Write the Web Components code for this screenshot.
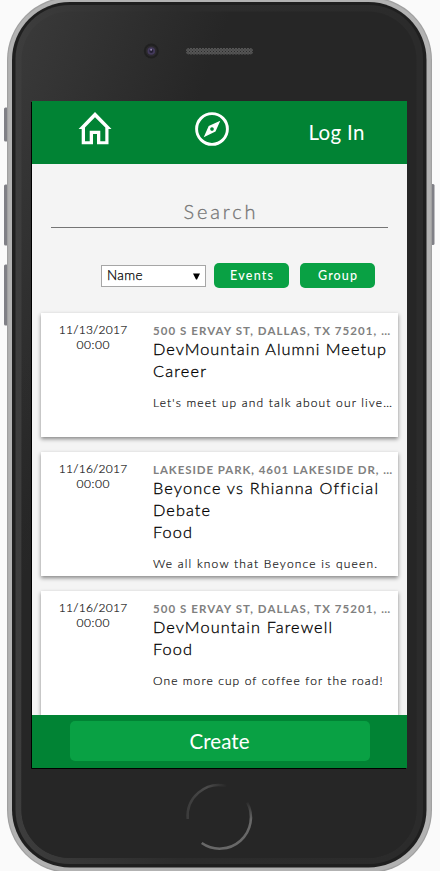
<!DOCTYPE html>
<html lang="en"><head><meta charset="utf-8"><title>Events</title>
<style>html,body{margin:0;background:#fafafa}body{width:440px;height:871px;overflow:hidden;font-family:Lato,"Open Sans",sans-serif}</style></head>
<body>
<phone-device>
  <app-header></app-header>
  <search-panel></search-panel>
  <event-list>
    <event-card date="11/13/2017" time="00:00" place="500 S ERVAY ST, DALLAS, TX 75201, …" pw="237" name="DevMountain Alumni Meetup" nw="233" kind="Career" kw="53" text="Let's meet up and talk about our live…" tw="239"></event-card>
    <event-card date="11/16/2017" time="00:00" place="LAKESIDE PARK, 4601 LAKESIDE DR, …" pw="239" name="Beyonce vs Rhianna Official" nw="224" more="Debate" mw="57" kind="Food" kw="39" text="We all know that Beyonce is queen." tw="224"></event-card>
    <event-card date="11/16/2017" time="00:00" place="500 S ERVAY ST, DALLAS, TX 75201, …" pw="237" name="DevMountain Farewell" nw="179" kind="Food" kw="39" text="One more cup of coffee for the road!" tw="229"></event-card>
  </event-list>
  <create-bar></create-bar>
</phone-device>
<script>
// Text line whose letter spacing is set so that it fills a given width.
customElements.define('fit-text', class extends HTMLElement {
  connectedCallback() {
    if (this.shadowRoot) return;
    this.attachShadow({mode:'open'}).innerHTML = `<style>:host{display:block;white-space:nowrap}span{display:inline-block}</style><span></span>`;
    const s = this.shadowRoot.querySelector('span');
    s.textContent = this.getAttribute('text');
    const w = +this.getAttribute('w'), n = s.textContent.length;
    const ls = (w - s.getBoundingClientRect().width) / (n - 1);
    s.style.letterSpacing = ls.toFixed(3) + 'px';
    s.style.marginRight = (-ls).toFixed(3) + 'px';
  }
});
customElements.define('phone-device', class extends HTMLElement {
  constructor() { super(); this.attachShadow({mode:'open'}).innerHTML = `
<style>
:host{display:block;position:relative;width:440px;height:871px;overflow:hidden;box-sizing:border-box;padding:101px 33px 103px 32px}
svg{position:absolute;left:0;top:0}
main{position:relative;display:flex;flex-direction:column;width:375px;height:667px;background:#f4f4f4;overflow:hidden}
</style>
<svg width="440" height="871" viewBox="0 0 440 871">
<defs>
<linearGradient id="g" gradientUnits="userSpaceOnUse" x1="12" y1="60" x2="190" y2="125"><stop offset="0" stop-color="#393939"/><stop offset="1" stop-color="#262626"/></linearGradient>
<linearGradient id="rim" x1="0" y1="0" x2="1" y2="0"><stop offset="0" stop-color="#3d3d3d"/><stop offset=".4" stop-color="#2c2c2c"/><stop offset="1" stop-color="#2b2b2b"/></linearGradient>
<linearGradient id="fade" x1="0" y1="0" x2="0" y2="1"><stop offset=".4" stop-color="#262626" stop-opacity="0"/><stop offset=".9" stop-color="#262626"/></linearGradient>
<linearGradient id="h1" x1="0" y1="0" x2="1" y2="0"><stop offset="0" stop-color="#3c3c3c"/><stop offset=".5" stop-color="#4b4b4b"/><stop offset="1" stop-color="#282828"/></linearGradient>
<linearGradient id="h2" gradientUnits="userSpaceOnUse" x1="0" y1="802" x2="0" y2="820"><stop offset="0" stop-color="#2a2a2a"/><stop offset="1" stop-color="#686868"/></linearGradient>
<pattern id="p" width="3" height="3" patternUnits="userSpaceOnUse"><rect width="3" height="3" fill="#555"/><rect width="1" height="1" fill="#2b2b2b"/><rect x="1.500" y="1.500" width="1" height="1" fill="#333"/></pattern>
</defs>
<g fill="#808086"><rect x="4" y="107.500" width="4" height="34" rx="1.500"/><rect x="4" y="184.500" width="4" height="61" rx="1.500"/><rect x="4" y="264.500" width="4" height="61" rx="1.500"/><rect x="431" y="184" width="3.500" height="61" rx="1.500"/></g>
<rect x="7" y="-3" width="425" height="876" rx="63" fill="#a0a0a0"/>
<rect x="8.200" y="-1.800" width="422.600" height="873.600" rx="62" fill="#b2b2b2"/>
<rect x="12" y="2" width="414.500" height="865.500" rx="58" fill="#1f1f1f"/>
<rect x="15.500" y="5" width="407.500" height="859" rx="54" fill="url(#rim)"/>
<rect x="21.500" y="11.500" width="395" height="846.500" rx="48" fill="url(#g)"/>
<rect x="21.500" y="11.500" width="395" height="846.500" rx="48" fill="url(#fade)"/>
<circle cx="151.300" cy="51" r="7.500" fill="#202020"/><circle cx="151.300" cy="51" r="5.500" fill="#2c2a2e"/><circle cx="151.300" cy="51" r="3.800" fill="#443a5c"/><circle cx="151.300" cy="51" r="2" fill="#252033"/><circle cx="151.100" cy="49.700" r="1" fill="#9187ab"/>
<rect x="186" y="48" width="67" height="6.500" rx="3.200" fill="url(#p)"/>
<path d="M187.700 819A31.300 31.300 0 0 1 226.200 785.900" fill="none" stroke="url(#h1)" stroke-width="2.500"/>
<path d="M247.200 802.500A31.300 31.300 0 0 1 201.700 843" fill="none" stroke="url(#h2)" stroke-width="2.500"/>
<path d="M31.500 102V768.500H406" fill="none" stroke="#000"/>
</svg><main><slot></slot></main>`; }
});
customElements.define('app-header', class extends HTMLElement {
  constructor() { super(); this.attachShadow({mode:'open'}).innerHTML = `
<style>:host{display:grid;grid-template-columns:126px 108px 141px;height:63px;flex:none;background:#018334;color:#fff;font-size:20.500px;line-height:24px}
a{display:flex;justify-content:center;padding-top:8px}.l{padding-top:19px}</style>
<a><svg width="40" height="40" viewBox="75 109 40 40"><path fill="#fff" fill-rule="evenodd" d="M95 112L111.500 129H108.500V144.200H97V134H93V144.200H81.700V129H78.600ZM95 117.300L85 127.500V141.200H89.700V130.800H100.300V141.200H105.300V127.500Z"/></svg></a>
<a><svg width="40" height="40" viewBox="192 109 40 40"><circle cx="212" cy="129" r="15.400" fill="none" stroke="#fff" stroke-width="2.900"/><path fill="#fff" fill-rule="evenodd" d="M220.300 120.700L215.500 131.500L203.700 137.300L208.700 126ZM212 127.200a1.800 1.800 0 1 0 .01 0Z"/></svg></a>
<a class="l"><fit-text text="Log In" w="56"></fit-text></a>`; }
});
customElements.define('search-panel', class extends HTMLElement {
  constructor() { super(); this.attachShadow({mode:'open'}).innerHTML = `
<style>:host{display:block;height:149px;flex:none}
.s{margin:0 19px;border-bottom:1px solid #757575;display:flex;justify-content:center;color:#757575;font-size:20px;font-weight:300;-webkit-text-stroke:.3px #757575;line-height:24px;padding-top:35px;box-sizing:border-box;height:64px}
.r{display:flex;margin:35px 0 0 69px;align-items:center}
.sel{box-sizing:border-box;width:105px;height:22px;border:1px solid #a6a6a6;background:#fff;display:flex;justify-content:space-between;padding:1px 5px;font-size:13.500px;font-weight:300;-webkit-text-stroke:.25px #000;line-height:17px;color:#000;margin-right:8px}
b{display:flex;justify-content:center;width:75px;height:25px;border-radius:5px;background:#09a144;color:#fff;font-size:12.500px;line-height:25px;margin-right:11px;font-weight:500}
svg{margin-top:6px}</style>
<div class="s"><fit-text text="Search" w="72"></fit-text></div>
<div class="r"><div class="sel"><fit-text text="Name" w="35.500"></fit-text><svg width="7" height="7"><path d="M0 .5H7L4 6.500H3Z"/></svg></div><b><fit-text text="Events" w="43"></fit-text></b><b><fit-text text="Group" w="39"></fit-text></b></div>`; }
});
customElements.define('event-list', class extends HTMLElement {
  constructor() { super(); this.attachShadow({mode:'open'}).innerHTML = `<style>:host{display:flex;flex-direction:column;gap:15px;padding:0 9px;height:402px;box-sizing:border-box;flex:none}</style><slot></slot>`; }
});
customElements.define('event-card', class extends HTMLElement {
  connectedCallback() {
    if (this.shadowRoot) return;
    const a = k => this.getAttribute(k), f = (c,t,w) => `<fit-text class="${c}" text="${t}" w="${w}"></fit-text>`;
    this.attachShadow({mode:'open'}).innerHTML = `
<style>:host{display:grid;grid-template-columns:104px 1fr;column-gap:8px;flex:none;box-sizing:border-box;width:357px;height:124px;background:#fff;box-shadow:0 2px 4px rgba(0,0,0,.45);color:#000}
.d{display:flex;flex-direction:column;align-items:center;padding-top:9px;font-size:12px;line-height:15px;color:#111}
.d,.t{font-weight:300;-webkit-text-stroke:.2px #111}
.i{padding-top:10px}.p{font-size:11.500px;line-height:16px;font-weight:700;color:#808080}.n{font-size:16.300px;line-height:22px;font-weight:300;-webkit-text-stroke:.3px #000}.n:nth-child(2){margin-top:-1px}.t{font-size:12px;line-height:16px;margin-top:13px;color:#111}</style>
<div class="d">${f('',a('date'),68.500)}${f('',a('time'),33)}</div>
<div class="i">${f('p',a('place'),a('pw'))}${f('n',a('name'),a('nw'))}${a('more')?f('n',a('more'),a('mw')):''}${f('n',a('kind'),a('kw'))}${f('t',a('text'),a('tw'))}</div>`;
  }
});
customElements.define('create-bar', class extends HTMLElement {
  constructor() { super(); this.attachShadow({mode:'open'}).innerHTML = `
<style>:host{display:flex;justify-content:center;box-sizing:border-box;padding-top:6px;height:53px;flex:none;background:#018334;position:relative}
b{display:flex;justify-content:center;width:300px;height:40px;border-radius:5px;background:#09a144;color:#fff;font-size:20.500px;line-height:40px;font-weight:400}</style>
<b><fit-text text="Create" w="60"></fit-text></b>`; }
});
</script>
</body></html>
